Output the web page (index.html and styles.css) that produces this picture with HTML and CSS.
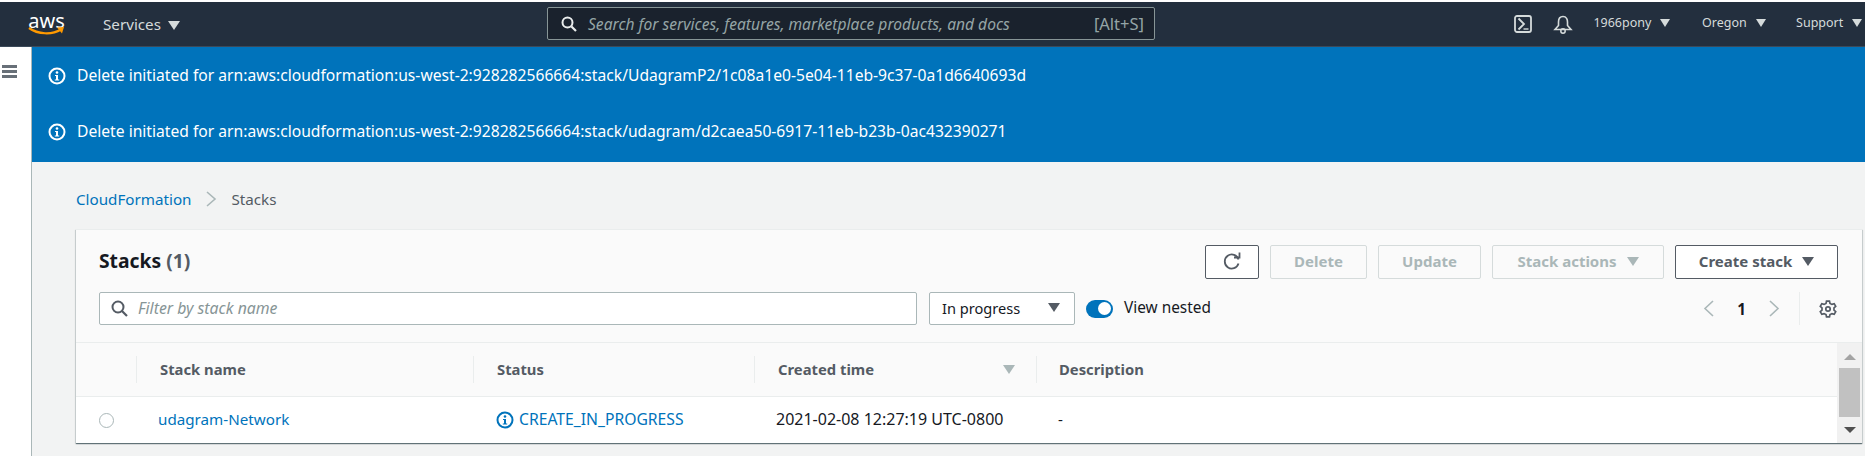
FILE: index.html
```html
<!DOCTYPE html>
<html lang="en">
<head>
    <meta charset="UTF-8">
    <meta name="viewport" content="width=device-width, initial-scale=1.0">
    <title>CloudFormation - Stacks</title>
    <link rel="stylesheet" href="styles.css">
</head>
<body>
    <header class="nav">
        <div class="logo">
            <span class="logo-text">aws</span>
            <svg class="logo-smile" width="37" height="10" viewBox="0 0 37 10"><path d="M1 2C10 8.500 24 9 33 3.500" fill="none" stroke="#f90" stroke-width="2.200"/><path d="M29 1.500L36 1L34 7.500Z" fill="#f90"/></svg>
        </div>
        <div class="nav-services">Services <i class="caret caret-nav-big"></i></div>
        <div class="nav-search">
            <svg width="16" height="16" viewBox="0 0 16 16"><circle cx="6.500" cy="6.500" r="5" fill="none" stroke="#eaeded" stroke-width="2"/><path d="M10.500 10.500L15 15" stroke="#eaeded" stroke-width="2.200"/></svg>
            <span class="nav-search-text">Search for services, features, marketplace products, and docs</span>
            <span class="nav-search-key">[Alt+S]</span>
        </div>
        <div class="nav-right">
            <svg class="icon-term" width="18" height="18" viewBox="0 0 18 18"><rect x="1" y="1" width="16" height="16" rx="2" fill="none" stroke="#d5dbdb" stroke-width="1.800"/><path d="M4.500 3.500L10 9L4.500 14.500" fill="none" stroke="#d5dbdb" stroke-width="1.800"/><path d="M9.500 14H14.500" stroke="#d5dbdb" stroke-width="1.400"/></svg>
            <svg class="icon-bell" width="20" height="19" viewBox="0 0 20 19"><path d="M10 1.500C6.500 1.500 5.500 4.500 5.500 7V10.500L2 14.500H18L14.500 10.500V7C14.500 4.500 13.500 1.500 10 1.500Z" fill="none" stroke="#d5dbdb" stroke-width="1.600"/><circle cx="10" cy="16" r="2.200" fill="none" stroke="#d5dbdb" stroke-width="1.500"/></svg>
            <span class="nav-item nav-user">1966pony <i class="caret caret-nav"></i></span>
            <span class="nav-item nav-region">Oregon <i class="caret caret-nav"></i></span>
            <span class="nav-item nav-support">Support <i class="caret caret-nav"></i></span>
        </div>
    </header>

    <div class="page">
        <aside class="rail">
            <div class="burger"><span></span><span></span><span></span></div>
        </aside>
        <main class="main">
            <section class="flash">
                <div class="flash-row">
                    <svg class="info" width="18" height="18" viewBox="0 0 18 18"><circle cx="9" cy="9" r="7.500" fill="none" stroke="#fff" stroke-width="2"/><circle cx="9" cy="5.500" r="1.300" fill="#fff"/><path d="M7 8H10V12.500H11.200V13.500H6.800V12.500H8V9H7Z" fill="#fff"/></svg>
                    <span>Delete initiated for arn:aws:cloudformation:us-west-2:928282566664:stack/UdagramP2/1c08a1e0-5e04-11eb-9c37-0a1d6640693d</span>
                </div>
                <div class="flash-row">
                    <svg class="info" width="18" height="18" viewBox="0 0 18 18"><circle cx="9" cy="9" r="7.500" fill="none" stroke="#fff" stroke-width="2"/><circle cx="9" cy="5.500" r="1.300" fill="#fff"/><path d="M7 8H10V12.500H11.200V13.500H6.800V12.500H8V9H7Z" fill="#fff"/></svg>
                    <span>Delete initiated for arn:aws:cloudformation:us-west-2:928282566664:stack/udagram/d2caea50-6917-11eb-b23b-0ac432390271</span>
                </div>
            </section>

            <nav class="crumbs">
                <a class="link" href="#">CloudFormation</a>
                <svg width="12" height="16" viewBox="0 0 12 16"><path d="M2 1L10 8L2 15" fill="none" stroke="#aab7b8" stroke-width="1.600"/></svg>
                <span class="crumb-now">Stacks</span>
            </nav>

            <section class="card">
                <div class="card-head">
                    <div class="head-top">
                        <h1 class="title">Stacks <span class="count">(1)</span></h1>
                        <div class="actions">
                            <button class="btn btn-refresh"><svg width="20" height="20" viewBox="0 0 20 20"><path d="M16.500 8.500A7 7 0 1 0 16.500 12.500" fill="none" stroke="#545b64" stroke-width="1.800"/><path d="M12 6.500H17.500V1.500" fill="none" stroke="#545b64" stroke-width="1.800"/></svg></button>
                            <button class="btn btn-off btn-delete">Delete</button>
                            <button class="btn btn-off btn-update">Update</button>
                            <button class="btn btn-off btn-actions">Stack actions <i class="caret caret-off"></i></button>
                            <button class="btn btn-create">Create stack <i class="caret caret-dark"></i></button>
                        </div>
                    </div>
                    <div class="head-filter">
                        <div class="filter">
                            <svg width="17" height="17" viewBox="0 0 17 17"><circle cx="7" cy="7" r="5.500" fill="none" stroke="#545b64" stroke-width="2"/><path d="M11 11L16 16" stroke="#545b64" stroke-width="2.200"/></svg>
                            <span>Filter by stack name</span>
                        </div>
                        <div class="select">In progress <i class="caret caret-dark"></i></div>
                        <div class="toggle"><span class="toggle-knob"></span></div>
                        <span class="toggle-label">View nested</span>
                        <div class="pager">
                            <svg width="11" height="17" viewBox="0 0 11 17"><path d="M10 1L2 8.500L10 16" fill="none" stroke="#aab7b8" stroke-width="1.600"/></svg>
                            <b class="page-num">1</b>
                            <svg width="11" height="17" viewBox="0 0 11 17"><path d="M1 1L9 8.500L1 16" fill="none" stroke="#aab7b8" stroke-width="1.600"/></svg>
                        </div>
                        <div class="prefs">
                            <svg width="18" height="18" viewBox="0 0 18 18"><path d="M7.500 1.200H10.500L11 3.400L13 4.400L15.200 3.700L16.700 6.300L15 7.800V10.200L16.700 11.700L15.200 14.300L13 13.600L11 14.600L10.500 16.800H7.500L7 14.600L5 13.600L2.800 14.300L1.300 11.700L3 10.200V7.800L1.300 6.300L2.800 3.700L5 4.400L7 3.400Z" fill="none" stroke="#545b64" stroke-width="1.700"/><circle cx="9" cy="9" r="2.200" fill="none" stroke="#545b64" stroke-width="1.700"/></svg>
                        </div>
                    </div>
                </div>

                <div class="table-wrap">
                    <div class="table">
                        <div class="row row-head">
                            <div class="cell cell-radio"></div>
                            <div class="cell cell-name"><span class="th">Stack name</span></div>
                            <div class="cell cell-status"><span class="th">Status</span></div>
                            <div class="cell cell-time"><span class="th">Created time</span><i class="caret caret-off"></i></div>
                            <div class="cell cell-desc"><span class="th">Description</span></div>
                        </div>
                        <div class="row row-body">
                            <div class="cell cell-radio"><span class="radio"></span></div>
                            <div class="cell cell-name"><a class="link" href="#">udagram-Network</a></div>
                            <div class="cell cell-status">
                                <svg width="18" height="18" viewBox="0 0 18 18"><circle cx="9" cy="9" r="7.500" fill="none" stroke="#0073bb" stroke-width="2"/><circle cx="9" cy="5.500" r="1.300" fill="#0073bb"/><path d="M7 8H10V12.500H11.200V13.500H6.800V12.500H8V9H7Z" fill="#0073bb"/></svg>
                                <span class="status-text">CREATE_IN_PROGRESS</span>
                            </div>
                            <div class="cell cell-time"><span class="time-text">2021-02-08 12:27:19 UTC-0800</span></div>
                            <div class="cell cell-desc"><span class="desc-text">-</span></div>
                        </div>
                    </div>
                    <div class="scroll">
                        <i class="scroll-up"></i>
                        <div class="scroll-thumb"></div>
                        <i class="scroll-down"></i>
                    </div>
                </div>
            </section>
        </main>
    </div>
</body>
</html>
```

FILE: styles.css
```css
*{
    margin: 0;
    padding: 0;
    box-sizing: border-box;
}
html, body{
    height: 456px;
    overflow: hidden;
}
body{
    background: #fff;
    font-family: "Noto Sans", "Open Sans", sans-serif;
    font-size: 15.200px;
    color: #16191f;
}
.link{
    color: #0073bb;
    text-decoration: none;
}
.caret{
    display: inline-block;
    width: 0;
    height: 0;
    border-style: solid;
    border-color: transparent;
    border-width: 9px 6px 0;
}
.caret-off{
    border-top-color: #aab7b8;
}
.caret-dark{
    border-top-color: #545b64;
}
.caret-nav{
    border-width: 8px 5.500px 0;
    border-top-color: #d5dbdb;
    margin-left: 5.500px;
}
.caret-nav-big{
    border-top-color: #d5dbdb;
    margin-left: 3px;
}

/* top bar */
.nav{
    margin-top: 2px;
    height: 45px;
    background: #232f3e;
    border-bottom: 1px solid #3c4a5a;
    display: flex;
    align-items: center;
    color: #d5dbdb;
}
.logo{
    margin-left: 28px;
    width: 37px;
    height: 24px;
    position: relative;
    color: #fff;
}
.logo-text{
    display: block;
    text-align: center;
    font-size: 20px;
    line-height: 18px;
}
.logo-smile{
    position: absolute;
    left: 0;
    top: 14px;
}
.nav-services{
    margin-left: 38px;
    width: 82px;
    white-space: nowrap;
}
.nav-search{
    margin-left: 362px;
    width: 608px;
    height: 33px;
    margin-top: -1px;
    background: #1a222d;
    border: 1px solid #879596;
    border-radius: 2px;
    display: flex;
    align-items: center;
    padding: 0 10px 0 13px;
    font-size: 15.600px;
}
.nav-search-text{
    margin-left: 11px;
    font-style: italic;
    color: #95a5a6;
    flex: 1;
    white-space: nowrap;
}
.nav-search-key{
    color: #95a5a6;
    font-size: 16.500px;
}
.nav-right{
    margin-left: auto;
    display: flex;
    align-items: center;
    white-space: nowrap;
    font-size: 12.500px;
    padding-right: 3px;
}
.icon-bell{
    margin-left: 21px;
}
.nav-item{
    display: block;
    margin-bottom: 3px;
}
.nav-user{
    margin-left: 20px;
}
.nav-region{
    margin-left: 32px;
}
.nav-support{
    margin-left: 30.500px;
}

/* side rail + main */
.page{
    display: flex;
    height: 409px;
}
.rail{
    width: 32px;
    border-right: 1px solid #aab7b8;
    padding: 18px 0 0 2px;
}
.burger{
    width: 15px;
}
.burger span{
    display: block;
    height: 3px;
    background: #687078;
    margin-bottom: 2px;
}
.main{
    flex: 1;
    background: #f2f3f3;
    min-width: 0;
}

/* blue messages */
.flash{
    background: #0073bb;
    height: 115px;
    color: #fff;
    padding-top: 1px;
}
.flash-row{
    height: 56px;
    display: flex;
    align-items: center;
    padding-left: 16px;
    font-size: 15.650px;
}
.flash-row span{
    margin: 0 0 2px 11px;
}

/* breadcrumb */
.crumbs{
    display: flex;
    align-items: center;
    height: 26px;
    margin: 24px 0 0 44px;
    gap: 14px;
}
.crumb-now{
    color: #545b64;
}

/* stacks card */
.card{
    margin: 17px 3px 0 44px;
    height: 214px;
    background: #fafafa;
    border-top: 1px solid #eaeded;
    box-shadow: 0 1px 1px 0 rgba(0, 28, 36, 0.5), 1px 1px 1px 0 rgba(0, 28, 36, 0.1), -1px 1px 1px 0 rgba(0, 28, 36, 0.1);
}
.card-head{
    height: 113px;
    padding: 15px 0 0 23px;
    border-bottom: 1px solid #eaeded;
}
.head-top{
    display: flex;
    justify-content: space-between;
    align-items: center;
    height: 34px;
    padding-right: 24px;
}
.title{
    font-size: 19.300px;
    font-weight: 700;
    padding-bottom: 3px;
}
.count{
    color: #545b64;
}
.actions{
    display: flex;
    gap: 11px;
}
.btn{
    height: 34px;
    background: #fff;
    border: 1px solid #545b64;
    border-radius: 2px;
    font: 700 15px "Noto Sans", "Open Sans", sans-serif;
    color: #545b64;
    display: flex;
    align-items: center;
    justify-content: center;
    white-space: nowrap;
    padding-bottom: 2px;
}
.btn-off{
    border-color: #d5dbdb;
    color: #aab7b8;
    background: #fafafa;
}
.btn-refresh{
    width: 54px;
}
.btn-delete{
    width: 97px;
}
.btn-update{
    width: 103px;
}
.btn-actions{
    width: 172px;
    gap: 10px;
}
.btn-create{
    width: 163px;
    gap: 10px;
}
.head-filter{
    display: flex;
    align-items: center;
    height: 33px;
    margin-top: 13px;
    padding-right: 25px;
}
.filter{
    width: 818px;
    height: 33px;
    background: #fff;
    border: 1px solid #aab7b8;
    border-radius: 2px;
    display: flex;
    align-items: center;
    padding-left: 11px;
    font-style: italic;
    color: #879596;
    font-size: 15.800px;
}
.filter span{
    margin: 0 0 2px 10px;
}
.select{
    margin-left: 12px;
    width: 146px;
    height: 33px;
    background: #fff;
    border: 1px solid #aab7b8;
    border-radius: 2px;
    display: flex;
    align-items: center;
    justify-content: space-between;
    padding: 0 14px 2px 12px;
    font-size: 14.600px;
}
.toggle{
    margin-left: 11px;
    width: 27px;
    height: 18px;
    border-radius: 9px;
    background: #0073bb;
    display: flex;
    align-items: center;
    justify-content: flex-end;
    padding-right: 2px;
}
.toggle-knob{
    width: 13px;
    height: 13px;
    border-radius: 50%;
    background: #fff;
}
.toggle-label{
    margin: 0 0 3px 11px;
    font-size: 15.400px;
}
.pager{
    margin-left: auto;
    display: flex;
    align-items: center;
    gap: 23px;
}
.page-num{
    font-weight: 700;
}
.prefs{
    margin-left: 19px;
    height: 33px;
    padding-left: 19px;
    border-left: 1px solid #eaeded;
    display: flex;
    align-items: center;
}

/* table */
.table-wrap{
    display: flex;
    height: 100px;
}
.table{
    flex: 1;
    min-width: 0;
}
.row{
    display: grid;
    grid-template-columns: 60px 337px 281px 282px 1fr;
}
.row-head{
    height: 54px;
    background: #fafafa;
    border-bottom: 1px solid #eaeded;
    align-items: center;
}
.row-head .cell{
    height: 27px;
    display: flex;
    align-items: center;
    border-left: 1px solid #eaeded;
    padding-left: 23px;
}
.row-head .cell-radio{
    border-left: 0;
}
.row-head .cell-time{
    justify-content: space-between;
    padding-right: 21px;
}
.row-head .cell-desc{
    padding-left: 22px;
}
.th{
    font-weight: 700;
    color: #545b64;
    font-size: 14.800px;
    margin-bottom: 2px;
}
.row-body{
    height: 46px;
    background: #fff;
    align-items: center;
}
.row-body .cell{
    display: flex;
    align-items: center;
    padding-left: 22px;
}
.row-body .cell-radio{
    padding-left: 23px;
}
.row-body .cell-status{
    padding-left: 23px;
}
.row-body .link, .status-text, .time-text, .desc-text{
    margin-bottom: 2px;
}
.status-text{
    margin-left: 5px;
    color: #0073bb;
    font-size: 15.700px;
}
.time-text{
    font-size: 16px;
}
.radio{
    width: 15px;
    height: 15px;
    border-radius: 50%;
    background: #fff;
    border: 1px solid #aab7b8;
}
.scroll{
    width: 25px;
    background: #f1f1f1;
    display: flex;
    flex-direction: column;
    align-items: center;
    padding-top: 11px;
}
.scroll-up{
    width: 0;
    height: 0;
    border-style: solid;
    border-color: transparent;
    border-width: 0 6px 6px;
    border-bottom-color: #a3a3a3;
}
.scroll-thumb{
    width: 21px;
    height: 49px;
    background: #c1c1c1;
    margin-top: 8px;
}
.scroll-down{
    width: 0;
    height: 0;
    border-style: solid;
    border-color: transparent;
    border-width: 6px 6px 0;
    border-top-color: #505050;
    margin-top: 10px;
}
```
